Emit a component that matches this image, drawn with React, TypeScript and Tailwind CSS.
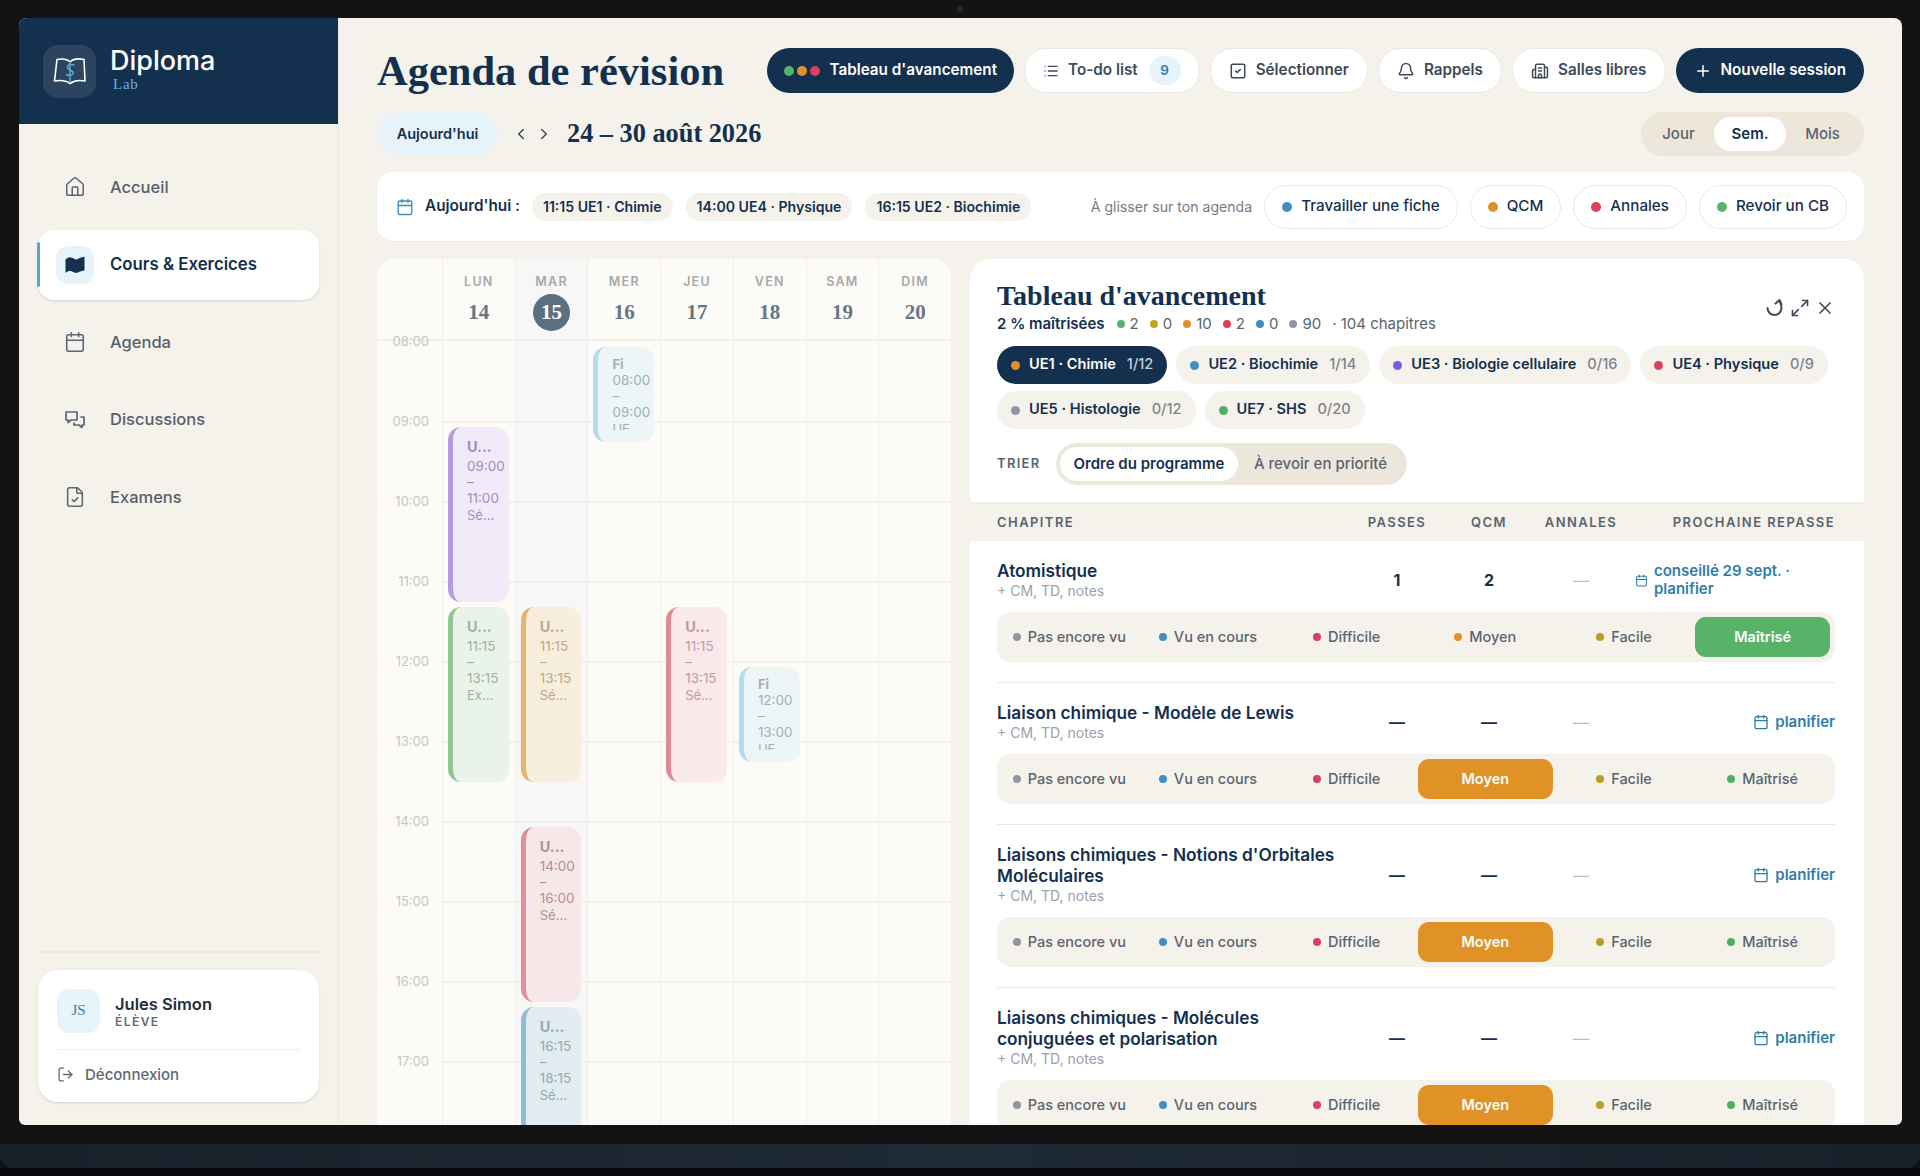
import { Home, Calendar, FileCheck, LogOut, ChevronLeft, ChevronRight, List, SquareCheck, Bell, Building2, Plus, Maximize2, X } from "lucide-react";

const serif = "font-['Liberation_Serif',serif]";

const hours = ["08:00", "09:00", "10:00", "11:00", "12:00", "13:00", "14:00", "15:00", "16:00", "17:00"];

type Ev = { title: string; start: number; end: number; range: [string, string]; sub: string; cls: string; text: string };

const days: { name: string; num: string; today?: boolean; events: Ev[] }[] = [
  {
    name: "LUN",
    num: "14",
    events: [
      { title: "U...", start: 9, end: 11, range: ["09:00", "11:00"], sub: "Sé...", cls: "bg-[#f1eaf8] border-[#b49be2]", text: "text-[#a08fc0]" },
      { title: "U...", start: 11.25, end: 13.25, range: ["11:15", "13:15"], sub: "Ex...", cls: "bg-[#eaf3e9] border-[#8ec792]", text: "text-[#9db3a0]" },
    ],
  },
  {
    name: "MAR",
    num: "15",
    today: true,
    events: [
      { title: "U...", start: 11.25, end: 13.25, range: ["11:15", "13:15"], sub: "Sé...", cls: "bg-[#f7eedd] border-[#e9b468]", text: "text-[#bfa982]" },
      { title: "U...", start: 14, end: 16, range: ["14:00", "16:00"], sub: "Sé...", cls: "bg-[#f6e8e9] border-[#e08f9c]", text: "text-[#b88c99]" },
      { title: "U...", start: 16.25, end: 18.25, range: ["16:15", "18:15"], sub: "Sé...", cls: "bg-[#e1edf0] border-[#8fbdd8]", text: "text-[#93a9b2]" },
    ],
  },
  {
    name: "MER",
    num: "16",
    events: [{ title: "Fi", start: 8, end: 9, range: ["08:00", "09:00"], sub: "UE", cls: "bg-[#eef5f7] border-[#b3dbec]", text: "text-[#9fb1b8]" }],
  },
  {
    name: "JEU",
    num: "17",
    events: [{ title: "U...", start: 11.25, end: 13.25, range: ["11:15", "13:15"], sub: "Sé...", cls: "bg-[#f9e9ea] border-[#e08a96]", text: "text-[#c09aa5]" }],
  },
  {
    name: "VEN",
    num: "18",
    events: [{ title: "Fi", start: 12, end: 13, range: ["12:00", "13:00"], sub: "UE", cls: "bg-[#eef5f7] border-[#b3dbec]", text: "text-[#9fb1b8]" }],
  },
  { name: "SAM", num: "19", events: [] },
  { name: "DIM", num: "20", events: [] },
];

const ues = [
  { label: "UE1 · Chimie", count: "1/12", dot: "bg-[#e0922a]", active: true },
  { label: "UE2 · Biochimie", count: "1/14", dot: "bg-[#3f8fc0]" },
  { label: "UE3 · Biologie cellulaire", count: "0/16", dot: "bg-[#7c5ce0]" },
  { label: "UE4 · Physique", count: "0/9", dot: "bg-[#d9415f]" },
  { label: "UE5 · Histologie", count: "0/12", dot: "bg-[#8f96a3]" },
  { label: "UE7 · SHS", count: "0/20", dot: "bg-[#4fae5f]" },
];

const stats = [
  { n: "2", dot: "bg-[#58b368]" },
  { n: "0", dot: "bg-[#c4a41f]" },
  { n: "10", dot: "bg-[#e0922a]" },
  { n: "2", dot: "bg-[#d9415f]" },
  { n: "0", dot: "bg-[#3f8fc0]" },
  { n: "90", dot: "bg-[#8f96a3]" },
];

const statuses = [
  { label: "Pas encore vu", dot: "bg-[#8f96a3]", on: "" },
  { label: "Vu en cours", dot: "bg-[#3f8fc0]", on: "" },
  { label: "Difficile", dot: "bg-[#d9415f]", on: "" },
  { label: "Moyen", dot: "bg-[#e0922a]", on: "bg-[#e09226]" },
  { label: "Facile", dot: "bg-[#b9a020]", on: "" },
  { label: "Maîtrisé", dot: "bg-[#4fae5f]", on: "bg-[#58b368]" },
];

const chapters = [
  { title: ["Atomistique"], passes: "1", qcm: "2", next: "conseillé 29 sept. · planifier", status: "Maîtrisé" },
  { title: ["Liaison chimique - Modèle de Lewis"], passes: "—", qcm: "—", next: "planifier", status: "Moyen" },
  { title: ["Liaisons chimiques - Notions d'Orbitales", "Moléculaires"], passes: "—", qcm: "—", next: "planifier", status: "Moyen" },
  { title: ["Liaisons chimiques - Molécules", "conjuguées et polarisation"], passes: "—", qcm: "—", next: "planifier", status: "Moyen" },
];

function Logo() {
  return (
    <svg width="34" height="32" viewBox="0 0 34 32" fill="none" stroke="#fff" strokeWidth="1.6" strokeLinejoin="round" strokeLinecap="round">
      <path d="M17 7C14 4 9 3.500 4 4.500L1.500 26C7 25 13 25.500 17 28.500C21 25.500 27 25 32 26L31 4.500C26 3.500 20 4 17 7Z" />
      <path d="M17 7V27" stroke="#5aa5d3" />
      <path d="M21 10C17 8.500 13 11 15 13.500C17 16 21 15.500 20 18.500C19 21 15 20.500 13.500 19.500" stroke="#5aa5d3" />
    </svg>
  );
}

function MapIcon() {
  return (
    <svg width="20" height="18" viewBox="0 0 20 18" fill="#14304f">
      <path d="M0.500 3.500C3 1 5 0.800 7 1.800C9.500 3 11 4 13 3C15 1.800 17 0.800 19.500 0.800V14.500C17 14.500 15 15.500 13 16.500C11 17.500 9.500 16.500 7 15.500C5 14.500 3 15 0.500 17Z" />
    </svg>
  );
}

function Discussions() {
  return (
    <svg width="24" height="24" viewBox="0 0 24 24" fill="none" stroke="#5b6673" strokeWidth="1.7" strokeLinecap="round" strokeLinejoin="round">
      <path d="M3 4h11v8H8l-3 2.500V12H3Z" />
      <path d="M18 9h3v8h-2v2.500L16 17h-5v-2" />
    </svg>
  );
}

function ReloadIcon() {
  return (
    <svg width="20" height="20" viewBox="0 0 20 20" fill="none" stroke="#3d4a58" strokeWidth="2" strokeLinecap="round" strokeLinejoin="round">
      <path d="M2.500 10a7 7 0 0 0 14 0c0-2.500-.5-4.500-2-6.500" />
      <path d="M10.500 5.500l4-3.500 2 4.500" />
    </svg>
  );
}

function NavRow({ label, icon }: { label: string; icon: React.ReactNode }) {
  return (
    <div className="flex h-[70px] items-center pl-[18px]">
      <div className="flex w-[38px] justify-center">{icon}</div>
      <span className="ml-4 text-[16.500px] font-medium text-[#56606c]">{label}</span>
    </div>
  );
}

function Pill({ children, dark, tight }: { children: React.ReactNode; dark?: boolean; tight?: boolean }) {
  return (
    <button className={`flex h-[45px] items-center gap-[9px] rounded-full text-[15.250px] font-semibold ${tight ? "px-[17px]" : "px-[18px]"} ${dark ? "bg-[#14304f] text-white" : "border border-[#ece8df] bg-white text-[#3d4a58]"}`}>
      {children}
    </button>
  );
}

function EventCard({ ev }: { ev: Ev }) {
  const top = (ev.start - 8) * 80 + 6;
  const height = (ev.end - ev.start) * 80 + 15;
  const short = ev.title === "Fi";
  return (
    <div
      className={`absolute right-[6px] left-[5px] rounded-[13px] border-l-[5px] pt-[9px] pl-[14px] ${short ? "pb-[12px]" : "pb-[8px]"} ${ev.cls} ${ev.text}`}
      style={{ top, height }}
    >
      <div className="h-full overflow-hidden">
        <div className={short ? "text-[13px] leading-[16px] font-bold" : "text-[14.500px] leading-[22px] font-bold"}>{ev.title}</div>
        <div className="text-[13.500px] leading-[16px]">
          {ev.range[0]}
          <br />–<br />
          {ev.range[1]}
        </div>
        <div className="text-[13px] leading-[18px]">{ev.sub}</div>
      </div>
    </div>
  );
}

function CalendarGrid() {
  return (
    <div className="flex w-[574px] shrink-0 flex-col overflow-hidden rounded-t-[18px] bg-[#fcfbf7]">
      <div className="flex h-[82px] shrink-0 border-b-2 border-[#f3f0e8]">
        <div className="w-[65px] shrink-0" />
        {days.map((d) => (
          <div key={d.name} className={`flex flex-1 flex-col items-center border-l border-[#f1eee6] pt-[15px] ${d.today ? "bg-[#f6f7f6]" : ""}`}>
            <span className="text-[12.500px] leading-4 font-semibold tracking-[0.1em] text-[#a5a9aa]">{d.name}</span>
            {d.today ? (
              <span className={`mt-[4px] flex h-[37px] w-[37px] items-center justify-center rounded-full bg-[#5d7080] text-[21px] font-bold text-white ${serif}`}>{d.num}</span>
            ) : (
              <span className={`mt-[4px] flex h-[37px] items-center text-[21px] font-bold text-[#687684] ${serif}`}>{d.num}</span>
            )}
          </div>
        ))}
      </div>
      <div className="flex min-h-0 flex-1">
        <div className="w-[65px] shrink-0">
          {hours.map((h) => (
            <div key={h} className="h-[80px] pr-[13px] text-right">
              <span className="block -translate-y-1/2 text-[13px] leading-4 text-[#c6c6c1]">{h}</span>
            </div>
          ))}
        </div>
        {days.map((d) => (
          <div key={d.name} className={`relative flex-1 border-l border-[#f1eee6] ${d.today ? "bg-[#f6f7f6]" : ""}`}>
            {hours.map((h, i) => (
              <div key={h} className={`h-[80px] border-t-2 ${i === 0 ? "border-transparent" : "border-[#f3f0e8]"}`} />
            ))}
            {d.events.map((ev) => (
              <EventCard key={ev.start} ev={ev} />
            ))}
          </div>
        ))}
      </div>
    </div>
  );
}

function StatusBar({ status }: { status: string }) {
  return (
    <div className="mt-[12px] mr-[29px] ml-[27px] grid grid-cols-6 gap-1 rounded-[14px] bg-[#f5f2eb] p-[5px]">
      {statuses.map((s) =>
        s.label === status ? (
          <div key={s.label} className={`flex h-[40px] items-center justify-center rounded-[11px] text-[14.500px] font-semibold text-white ${s.on}`}>
            {s.label}
          </div>
        ) : (
          <div key={s.label} className="flex h-[40px] items-center justify-center gap-[7px] text-[14.500px] font-medium text-[#5a6470]">
            <span className={`h-2 w-2 rounded-full ${s.dot}`} />
            {s.label}
          </div>
        ),
      )}
    </div>
  );
}

function ChapterRow({ c, last }: { c: (typeof chapters)[number]; last?: boolean }) {
  const long = c.next.length > 10;
  return (
    <div>
      <div className="flex items-center pt-[19px] pr-[29px] pl-[27px]">
        <div className="w-[340px] shrink-0">
          <div className="text-[17.250px] leading-[21px] font-semibold text-[#14304f]">
            {c.title.map((t) => (
              <div key={t}>{t}</div>
            ))}
          </div>
          <div className="text-[14px] leading-[19px] text-[#9aa1a9]">+ CM, TD, notes</div>
        </div>
        <div className="ml-[14px] w-[92px] text-center text-[16px] font-bold text-[#14304f]">{c.passes}</div>
        <div className="w-[92px] text-center text-[16px] font-bold text-[#14304f]">{c.qcm}</div>
        <div className="w-[92px] text-center text-[16px] text-[#b8bdc2]">—</div>
        <div className="flex flex-1 items-center justify-end gap-[6px] text-[15px] leading-[18px] font-semibold text-[#2f7ea8]">
          <Calendar size={long ? 13 : 16} strokeWidth={2} className="shrink-0" />
          <span className={long ? "w-[181px]" : ""}>{c.next}</span>
        </div>
      </div>
      <StatusBar status={c.status} />
      {!last && <div className="mt-[20px] mr-[29px] ml-[27px] h-px bg-[#ebe8e0]" />}
    </div>
  );
}

function ProgressPanel() {
  return (
    <div className="flex min-w-0 flex-1 flex-col overflow-hidden rounded-t-[20px] bg-white">
      <div className="relative pt-[22px] pr-[29px] pl-[27px]">
        <h2 className={`text-[28px] leading-[30px] font-bold text-[#14304f] ${serif}`}>Tableau d'avancement</h2>
        <div className="absolute top-[39px] right-[29px] flex items-center gap-[5px] text-[#3d4a58]">
          <ReloadIcon />
          <Maximize2 size={20} strokeWidth={2} />
          <X size={20} strokeWidth={2} />
        </div>
        <div className="mt-[3px] flex items-center text-[15px] leading-[20px] text-[#5a6470]">
          <span className="mr-3 font-semibold text-[#14304f]">2 % maîtrisées</span>
          {stats.map((s, i) => (
            <span key={i} className="mr-[11px] flex items-center gap-[5px]">
              <span className={`h-2 w-2 rounded-full ${s.dot}`} />
              {s.n}
            </span>
          ))}
          <span>· 104 chapitres</span>
        </div>
        <div className="mt-[12px] flex flex-wrap gap-x-[9px] gap-y-[7px]">
          {ues.map((u) => (
            <div key={u.label} className={`flex h-[38px] items-center gap-[9px] rounded-full px-[14px] text-[14.600px] font-semibold ${u.active ? "bg-[#14304f] text-white" : "bg-[#f5f2eb] text-[#14304f]"}`}>
              <span className={`h-[9px] w-[9px] rounded-full ${u.dot}`} />
              {u.label}
              <span className={`ml-[2px] font-medium ${u.active ? "text-[#c4cdd7]" : "text-[#7b8490]"}`}>{u.count}</span>
            </div>
          ))}
        </div>
        <div className="mt-[14px] flex items-center">
          <span className="w-[59px] text-[13px] font-semibold tracking-[0.1em] text-[#5a6470]">TRIER</span>
          <div className="flex h-[42px] w-[351px] items-center rounded-full bg-[#ece7da] p-1 text-[15px] font-semibold">
            <span className="flex h-[34px] w-[178px] items-center justify-center rounded-full bg-white text-[#14304f]">Ordre du programme</span>
            <span className="flex-1 text-center font-medium text-[#5a6470]">À revoir en priorité</span>
          </div>
        </div>
      </div>
      <div className="mt-[17px] flex h-[39px] shrink-0 items-center border-t-2 border-[#f0ede5] bg-[#f5f2eb] pr-[29px] pl-[27px] text-[13px] font-semibold tracking-[0.11em] text-[#5a6470]">
        <div className="w-[340px] shrink-0">CHAPITRE</div>
        <div className="ml-[14px] w-[92px] text-center">PASSES</div>
        <div className="w-[92px] text-center">QCM</div>
        <div className="w-[92px] text-center">ANNALES</div>
        <div className="flex-1 text-right">PROCHAINE REPASSE</div>
      </div>
      <div className="min-h-0 flex-1 overflow-hidden">
        {chapters.map((c, i) => (
          <ChapterRow key={i} c={c} last={i === chapters.length - 1} />
        ))}
      </div>
    </div>
  );
}

export default function App() {
  return (
    <div className="flex h-screen w-screen flex-col overflow-hidden bg-[#131313] font-['Inter',sans-serif]">
      <div className="flex h-[18px] shrink-0 justify-center pt-[6px]">
        <span className="h-[6px] w-[6px] rounded-full bg-[#2a2a2a]" />
      </div>
      <div className="mr-[18px] ml-[19px] flex h-[1107px] shrink-0 overflow-hidden rounded-t-[8px] rounded-b-[6px] bg-[#f5f2eb]">
        <aside className="flex w-[320px] shrink-0 flex-col border-r border-[#ebe7dd]">
          <div className="flex h-[106px] shrink-0 items-center gap-[14px] bg-[#14304f] pl-[24px]">
            <div className="flex h-[53px] w-[53px] items-center justify-center rounded-[15px] bg-[#2b4560]">
              <Logo />
            </div>
            <div className="-mt-[5px]">
              <div className="text-[27px] leading-[30px] font-medium text-white">Diploma</div>
              <div className={`ml-[3px] text-[15px] leading-[16px] tracking-[0.05em] text-[#6aaede] ${serif}`}>Lab</div>
            </div>
          </div>
          <nav className="flex flex-col gap-[7.500px] px-[19px] pt-[28px]">
            <NavRow label="Accueil" icon={<Home size={22} strokeWidth={1.7} className="text-[#5b6673]" />} />
            <div className="relative flex h-[70px] items-center rounded-[16px] bg-white pl-[18px] shadow-sm">
              <span className="absolute top-[12px] -left-px h-[45px] w-[3px] rounded-full bg-[#5aa5cf]" />
              <div className="flex h-[38px] w-[38px] items-center justify-center rounded-[12px] bg-[#e6f3fb]">
                <MapIcon />
              </div>
              <span className="ml-4 text-[16.800px] font-semibold text-[#14304f]">Cours &amp; Exercices</span>
            </div>
            <NavRow label="Agenda" icon={<Calendar size={22} strokeWidth={1.7} className="text-[#5b6673]" />} />
            <NavRow label="Discussions" icon={<Discussions />} />
            <NavRow label="Examens" icon={<FileCheck size={22} strokeWidth={1.7} className="text-[#5b6673]" />} />
          </nav>
          <div className="mt-auto px-[19px] pb-[23px]">
            <div className="h-[2px] bg-[#ece8df]" />
            <div className="mt-[17px] rounded-[20px] bg-white px-[19px] pt-[19px] pb-[16px] shadow-sm">
              <div className="flex items-center gap-[15px]">
                <div className={`flex h-[44px] w-[43px] items-center justify-center rounded-[12px] bg-[#e6f3fb] text-[15px] text-[#3d7f9e] ${serif}`}>JS</div>
                <div className="pt-[2px]">
                  <div className="text-[16.500px] leading-[19px] font-semibold text-[#1f2d3d]">Jules Simon</div>
                  <div className="text-[12px] leading-[15px] font-semibold tracking-[0.12em] text-[#5f6873]">ÉLÈVE</div>
                </div>
              </div>
              <div className="mt-[16px] h-px bg-[#f0ede5]" />
              <div className="mt-[14px] flex items-center gap-[11px] text-[15px] font-medium text-[#5f6873]">
                <LogOut size={17} strokeWidth={1.8} />
                Déconnexion
              </div>
            </div>
          </div>
        </aside>
        <main className="flex min-w-0 flex-1 flex-col pr-[38px] pl-[38px]">
          <div className="mt-[30px] flex items-center justify-between">
            <h1 className={`text-[42.500px] leading-[45px] font-bold text-[#14304f] ${serif}`}>Agenda de révision</h1>
            <div className="flex items-center gap-[10px]">
              <Pill dark tight>
                <span className="flex gap-[3px]">
                  <span className="h-[10px] w-[10px] rounded-full bg-[#58b368]" />
                  <span className="h-[10px] w-[10px] rounded-full bg-[#e0922a]" />
                  <span className="h-[10px] w-[10px] rounded-full bg-[#d9415f]" />
                </span>
                Tableau d'avancement
              </Pill>
              <Pill>
                <List size={16} />
                To-do list
                <span className="ml-[2px] flex h-[29px] w-[32px] items-center justify-center rounded-full bg-[#e6f3fb] text-[13.500px] font-semibold text-[#2f7ea8]">9</span>
              </Pill>
              <Pill>
                <SquareCheck size={18} />
                Sélectionner
              </Pill>
              <Pill>
                <Bell size={18} />
                Rappels
              </Pill>
              <Pill>
                <Building2 size={18} />
                Salles libres
              </Pill>
              <Pill dark>
                <Plus size={18} />
                Nouvelle session
              </Pill>
            </div>
          </div>
          <div className="mt-[19px] flex items-center">
            <button className="h-[44px] w-[121px] rounded-full bg-[#e6f3fb] text-[14.500px] font-semibold text-[#14304f]">Aujourd'hui</button>
            <div className="ml-[14px] flex items-center gap-[5px] text-[#3d4a58]">
              <ChevronLeft size={18} />
              <ChevronRight size={18} />
            </div>
            <span className={`ml-[14px] text-[26.300px] font-bold text-[#14304f] ${serif}`}>24 – 30 août 2026</span>
            <div className="ml-auto flex h-[44px] w-[223px] items-center rounded-full bg-[#ece7da] p-[5px] text-[15px] font-medium text-[#5a6470]">
              <span className="w-[65px] text-center">Jour</span>
              <span className="ml-[3px] flex h-[34px] w-[72px] items-center justify-center rounded-full bg-white font-semibold text-[#14304f]">Sem.</span>
              <span className="flex-1 text-center">Mois</span>
            </div>
          </div>
          <div className="mt-[16px] flex h-[69px] shrink-0 items-center rounded-[16px] bg-white pr-[17px] pl-[19px] shadow-[0_1px_2px_rgba(0,0,0,0.03)]">
            <Calendar size={18} strokeWidth={1.8} className="text-[#3f8fb5]" />
            <span className="mr-[12px] ml-[11px] text-[15.300px] font-semibold text-[#14304f]">Aujourd'hui :</span>
            <div className="flex gap-[13px]">
              {["11:15 UE1 · Chimie", "14:00 UE4 · Physique", "16:15 UE2 · Biochimie"].map((t) => (
                <span key={t} className="flex h-[28px] items-center rounded-full bg-[#f5f2eb] px-[11px] text-[14.100px] font-semibold text-[#14304f]">{t}</span>
              ))}
            </div>
            <span className="mr-[12px] ml-auto text-[14.100px] text-[#747c86]">À glisser sur ton agenda</span>
            <div className="flex gap-[12px]">
              {[
                { t: "Travailler une fiche", d: "bg-[#3f8fc0]" },
                { t: "QCM", d: "bg-[#e0922a]" },
                { t: "Annales", d: "bg-[#d9415f]" },
                { t: "Revoir un CB", d: "bg-[#58b368]" },
              ].map((p) => (
                <span key={p.t} className="flex h-[44px] items-center gap-[9px] rounded-full border border-[#ece8df] px-[17px] text-[15.200px] font-medium text-[#14304f]">
                  <span className={`h-[10px] w-[10px] rounded-full ${p.d}`} />
                  {p.t}
                </span>
              ))}
            </div>
          </div>
          <div className="mt-[18px] flex min-h-0 flex-1 gap-[19px]">
            <CalendarGrid />
            <ProgressPanel />
          </div>
        </main>
      </div>
      <div className="h-[19px] shrink-0" />
      <div className="h-[24px] shrink-0 rounded-b-[14px] bg-gradient-to-r from-[#18212a] via-[#1e2a35] to-[#18212a]" />
      <div className="flex-1 bg-[#05070a]" />
    </div>
  );
}
